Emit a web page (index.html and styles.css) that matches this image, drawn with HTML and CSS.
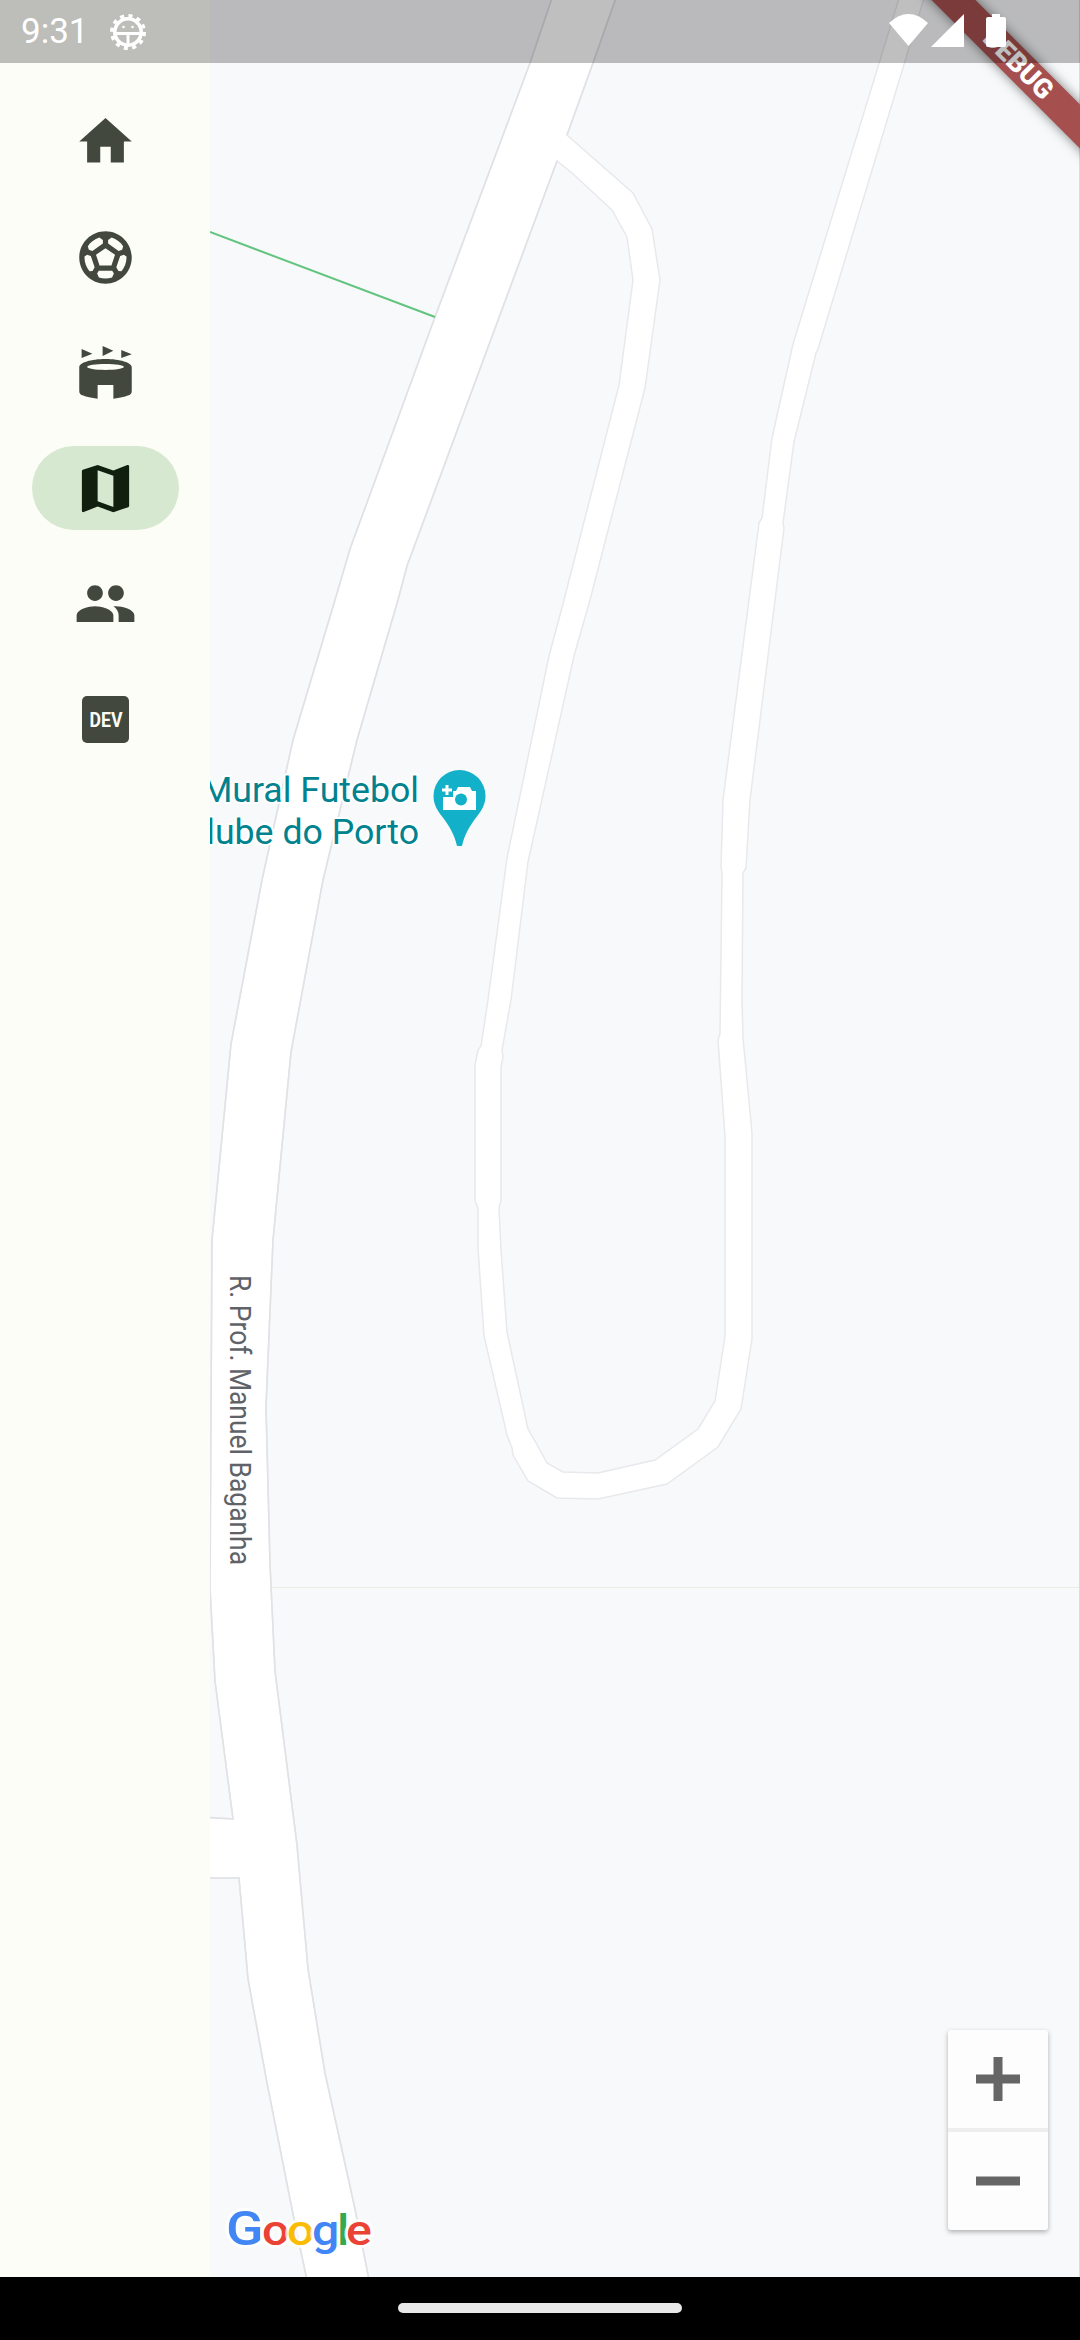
FILE: index.html
```html
<!DOCTYPE html>
<html lang="en">
<head>
<meta charset="utf-8">
<title>Map</title>
<link rel="stylesheet" href="styles.css">
</head>
<body>
<div class="screen">
  <div class="main">
    <nav class="rail">
      <div class="dest"><svg class="icon" viewBox="0 0 24 24"><path d="M10 20v-6h4v6h5v-8h3L12 3 2 12h3v8z"/></svg></div>
      <div class="dest"><svg class="icon" viewBox="0 0 24 24"><path d="M12 2C6.48 2 2 6.48 2 12s4.48 10 10 10 10-4.48 10-10S17.52 2 12 2zm1 3.3 1.35-.95c1.82.56 3.37 1.76 4.38 3.34l-.39 1.34-1.35.46L13 6.7V5.3zm-3.35-.95L11 5.3v1.4L7.01 9.49l-1.35-.46-.39-1.34c1.01-1.57 2.56-2.77 4.38-3.34zM7.08 17.11l-1.14.1C4.73 15.81 4 13.99 4 12c0-.12.01-.23.02-.35l1-.73 1.38.48 1.46 4.34-.78 1.37zm7.42 2.48c-.79.26-1.63.41-2.5.41s-1.71-.15-2.5-.41l-.69-1.49.64-1.1h5.11l.64 1.11-.7 1.48zM14.27 15H9.73l-1.35-4.02L12 8.44l3.63 2.54L14.27 15zm3.79 2.21-1.14-.1-.79-1.37 1.46-4.34 1.39-.47 1 .73c.01.11.02.22.02.34 0 1.99-.73 3.81-1.94 5.21z"/></svg></div>
      <div class="dest"><svg class="icon" viewBox="0 0 24 24"><path d="M2.900 3v3.500L7 4.900zM10.900 1.900v3.800L15 3.700zM18 3.400v3.100l4-1.500z"/><path fill-rule="evenodd" d="M2 10c0-1.700 4.500-3.100 10-3.100s10 1.400 10 3.100v9c0 1-.5 1.400-1.500 1.800-1.200.5-3 .9-5.500 1.200v-5.200H9V22c-2.500-.3-4.300-.7-5.500-1.200C2.500 20.400 2 20 2 19zM5 9.900c0 .6 3.100 1.100 7 1.100s7-.5 7-1.100-3.100-1.100-7-1.100-7 .5-7 1.100z"/></svg></div>
      <div class="dest"><div class="pill"><svg class="icon icon-active" viewBox="0 0 24 24"><path d="M20.500 3l-.16.03L15 5.100 9 3 3.360 4.900c-.21.07-.36.25-.36.48V20.500c0 .28.22.5.5.5l.16-.03L9 18.900l6 2.100 5.640-1.900c.21-.07.36-.25.36-.48V3.500c0-.28-.22-.5-.5-.5zM15 19l-6-2.110V5l6 2.110V19z"/></svg></div></div>
      <div class="dest"><svg class="icon" viewBox="0 0 24 24"><path d="M16 11c1.660 0 2.990-1.340 2.990-3S17.660 5 16 5c-1.660 0-3 1.340-3 3s1.340 3 3 3zm-8 0c1.660 0 2.990-1.340 2.990-3S9.660 5 8 5C6.340 5 5 6.340 5 8s1.340 3 3 3zm0 2c-2.330 0-7 1.170-7 3.500V19h14v-2.500c0-2.330-4.670-3.500-7-3.500zm8 0c-.29 0-.62.02-.97.05 1.160.84 1.970 1.970 1.970 3.450V19h6v-2.500c0-2.330-4.670-3.500-7-3.500z"/></svg></div>
      <div class="dest"><div class="dev"><svg class="dev-svg" viewBox="0 0 47 47"><text class="dev-text" x="7.500" y="31" textLength="33" lengthAdjust="spacingAndGlyphs">DEV</text></svg></div></div>
    </nav>
    <section class="map">
      <svg class="map-canvas" viewBox="210 0 870 2277">
        <line class="hairline" x1="272" y1="1587.500" x2="1080" y2="1587.500"/>
        <line class="edge-green" x1="1079.500" y1="0" x2="1079.500" y2="2277"/>
        <path class="road" d="M553,-5 L617,-5 593,63 567,135 633,193 652,229 660,280 645,388 590,600 574,656 528,862 511,1000 502,1050 503,1057 501,1067 501,1201 499,1208 501,1250 507,1332 528,1429 535,1441 547,1463 563,1472 598,1473 655,1460 698,1429 715,1401 725,1336 725,1136 718,1040 720,1034 722,873 721,866 723,800 759,523 762,518 772,438 793,344 900,-5 925,-5 818,349 816,353 794,442 783,523 784,528 750,800 746,868 743,873 742,1000 743,1038 752,1133 752,1339 741,1409 718,1447 667,1484 598,1499 557,1498 528,1481 513,1455 512,1448 507,1435 484,1336 478,1248 478,1208 475,1201 475,1065 478,1050 481,1046 488,1000 507,858 549,656 564,600 619,385 633,280 627,237 612,210 572,173 557,161 407,566 398,600 357,740 323,880 291,1052 273,1240 266,1407 270,1564 275,1671 297,1845 308,1969 325,2073 355,2209 370,2285 308,2285 293,2214 267,2083 248,1979 239,1878 200,1878 200,1817 233,1819 215,1681 210,1588 212,1240 231,1044 262,880 293,740 335,600 350,549 435,317 530,63 Z"/>
        <polyline class="road-edge" points="617,-5 593,63 567,135"/>
        <polyline class="road-edge" points="557,161 407,566 398,600 357,740 323,880 291,1052 273,1240 266,1407 270,1564 275,1671 297,1845 308,1969 325,2073 355,2209 370,2285"/>
        <polyline class="road-edge" points="308,2285 293,2214 267,2083 248,1979 239,1878 200,1878"/>
        <polyline class="road-edge" points="200,1817 233,1819 215,1681 210,1588 212,1240 231,1044 262,880 293,740 335,600 350,549 435,317 530,63 553,-5"/>
        <line class="park-line" x1="210" y1="232" x2="435" y2="317"/>
        <text class="street" transform="translate(230 1275) rotate(90)" textLength="290" lengthAdjust="spacingAndGlyphs">R. Prof. Manuel Baganha</text>
        <text class="poi" x="419" y="802" text-anchor="end">Mural Futebol</text>
        <text class="poi" x="419" y="844" text-anchor="end">Clube do Porto</text>
        <path class="pin" d="M433.500 796a26 26 0 0 1 52 0c0 8-3.500 14-9 21-6 8-12 17-14.500 29h-5c-2.500-12-8.500-21-14.500-29-5.500-7-9-13-9-21z"/>
        <path class="pin-cam" d="M443 810V797h10v-6h3l2-4h12l2 4h4v19z"/>
        <path class="pin-cam" d="M445.500 785h3v3.500h3.500v3h-3.500v3.500h-3v-3.500H442v-3h3.500z"/>
        <circle class="pin" cx="461" cy="799.500" r="6"/>
        <text class="google" transform="translate(226 2245) scale(1.15 1)"><tspan class="g-blue g-cap" x="0" y="0">G</tspan><tspan class="g-red" x="31.300" y="0">o</tspan><tspan class="g-yellow" x="53" y="0">o</tspan><tspan class="g-blue" x="74.800" y="0">g</tspan><tspan class="g-green" x="96.500" y="0">l</tspan><tspan class="g-red" x="104.300" y="0">e</tspan></text>
      </svg>
      <div class="zoom-controls">
        <div class="zoom-btn"><svg class="zoom-icon" viewBox="0 0 44 44"><path d="M17.500 0h9v17.500H44v9H26.500V44h-9V26.500H0v-9h17.500z"/></svg></div>
        <div class="zoom-divider"></div>
        <div class="zoom-btn"><svg class="zoom-icon" viewBox="0 0 44 44"><path d="M0 17.500h44v9H0z"/></svg></div>
      </div>
    </section>
  </div>
  <div class="navbar"><div class="home-pill"></div></div>
  <div class="debug-banner"><span class="debug-text">DEBUG</span></div>
  <header class="status">
    <div class="status-left">
      <span class="time">9:31</span>
      <svg class="gear" viewBox="0 0 36 36">
        <circle class="gear-teeth" cx="18" cy="18" r="16"/>
        <circle class="gear-ring" cx="18" cy="18" r="13.200"/>
        <path class="gear-t" d="M5 19.500h26M18 19.500V31"/>
        <circle class="gear-eye" cx="13.500" cy="13" r="1.300"/>
        <circle class="gear-eye" cx="22.500" cy="13" r="1.300"/>
      </svg>
    </div>
    <div class="status-right">
      <svg class="wifi" viewBox="0 0 39 32"><path d="M0 9Q19.500-9 39 9L19.500 32z"/></svg>
      <svg class="signal" viewBox="0 0 33 33"><path d="M33 0v33H0z"/></svg>
      <svg class="battery" viewBox="0 0 20 33"><path d="M6 0h8v3h4a2 2 0 0 1 2 2v26a2 2 0 0 1-2 2H2a2 2 0 0 1-2-2V5a2 2 0 0 1 2-2h4z"/></svg>
    </div>
  </header>
</div>
</body>
</html>
```
FILE: styles.css
```css
* { box-sizing: border-box; }
html, body { margin: 0; padding: 0; }
body { width: 1080px; height: 2340px; overflow: hidden; font-family: Roboto, sans-serif; background: #000; }
.screen { position: relative; width: 1080px; height: 2340px; overflow: hidden; display: flex; flex-direction: column; }
.main { display: flex; height: 2277px; }

.rail { width: 210px; flex: none; background: #fcfdf7; padding-top: 84px; display: flex; flex-direction: column; }
.dest { height: 115.5px; flex: none; display: flex; align-items: center; justify-content: center; }
.icon { width: 63px; height: 63px; display: block; fill: #43483f; }
.icon-active { fill: #101f0e; }
.pill { width: 147px; height: 84px; border-radius: 42px; background: #d6e8d0; display: flex; align-items: center; justify-content: center; }
.dev { width: 47px; height: 47px; border-radius: 5px; background: #43483f; }
.dev-svg { width: 47px; height: 47px; display: block; }
.dev-text { font-family: Roboto, sans-serif; font-weight: 700; font-size: 21px; fill: #fcfdf7; }

.map { position: relative; flex: 1; background: #f8f9fb; overflow: hidden; }
.map-canvas { position: absolute; left: 0; top: 0; width: 870px; height: 2277px; display: block; }
.hairline { stroke: #ecece6; stroke-width: 1; }
.edge-green { stroke: #c3edc6; stroke-width: 1; }
.road { fill: #fff; stroke: #e8e9ec; stroke-width: 1.5; }
.road-edge { fill: none; stroke: #e0e2e6; stroke-width: 1.6; }
.park-line { stroke: #62c47e; stroke-width: 2; }
.street { font-family: Roboto, sans-serif; font-size: 30px; fill: #5f6368; }
.poi { font-family: Roboto, sans-serif; font-size: 35.7px; fill: #00838f; stroke: #fff; stroke-width: 4px; paint-order: stroke; stroke-linejoin: round; }
.pin { fill: #12b1c9; }
.pin-cam { fill: #fff; }
.google { font-family: Roboto, sans-serif; font-weight: 500; font-size: 42px; stroke: #fff; stroke-opacity: .75; stroke-width: 6px; paint-order: stroke; stroke-linejoin: round; }
.g-cap { font-size: 48px; }
.g-blue { fill: #4285f4; }
.g-red { fill: #ea4335; }
.g-yellow { fill: #fbbc05; }
.g-green { fill: #34a853; }

.zoom-controls { position: absolute; left: 738px; top: 2030px; width: 100px; height: 200px; border-radius: 3px; background: #fdfdfd; box-shadow: 0 2px 5px rgba(0,0,0,.3); display: flex; flex-direction: column; }
.zoom-btn { flex: 1; display: flex; align-items: center; justify-content: center; }
.zoom-divider { height: 4px; flex: none; background: #eeeeee; }
.zoom-icon { width: 44px; height: 44px; display: block; fill: #666; }

.navbar { height: 63px; flex: none; background: #000; display: flex; align-items: center; justify-content: center; }
.home-pill { width: 284px; height: 10px; border-radius: 5px; background: #e8e8e8; margin-top: -1px; }

.debug-banner { position: absolute; left: 868px; top: 49px; width: 300px; height: 31px; transform: rotate(45deg); background: #a64f4f; box-shadow: 0 0 12px rgba(0,0,0,.5); display: flex; align-items: center; justify-content: center; }
.debug-text { font-family: Roboto, sans-serif; font-weight: 900; font-size: 27px; line-height: 31px; color: #fff; }

.status { position: absolute; left: 0; top: 0; width: 1080px; height: 63px; background: rgba(0,0,0,.25); display: flex; align-items: center; justify-content: space-between; padding: 0 74px 0 21px; }
.status-left { display: flex; align-items: center; gap: 21px; }
.time { font-family: Roboto, sans-serif; font-size: 35px; line-height: 63px; color: #fff; }
.gear { width: 36px; height: 36px; display: block; }
.gear-teeth { fill: none; stroke: #fff; stroke-width: 4; stroke-dasharray: 4 4.380; }
.gear-ring { fill: none; stroke: #fff; stroke-width: 3.600; }
.gear-t { fill: none; stroke: #fff; stroke-width: 3; }
.gear-eye { fill: #fff; }
.status-right { display: flex; align-items: flex-start; gap: 3px; padding-bottom: 2px; }
.wifi { width: 39px; height: 32px; display: block; fill: #fff; }
.signal { width: 33px; height: 33px; display: block; fill: #fff; margin-right: 19px; }
.battery { width: 20px; height: 33px; display: block; fill: #fff; }
```
